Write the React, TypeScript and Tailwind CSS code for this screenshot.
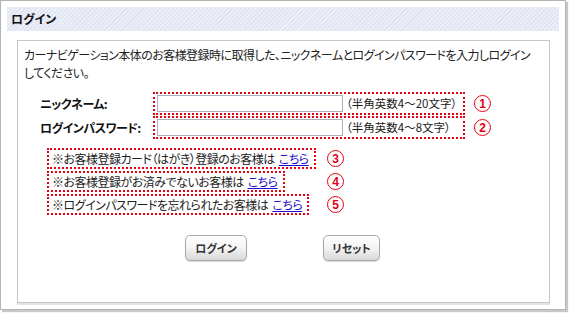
import React from "react";

function Circle({ n }: { n: string }) {
  return (
    <span className="w-[17px] h-[17px] rounded-full border-[1.5px] border-[#e50012] text-[#e50012] flex items-center justify-center text-[12px] font-bold leading-none shrink-0 font-['Liberation_Sans',sans-serif]">
      {n}
    </span>
  );
}

function Btn({ label, w }: { label: string; w: string }) {
  return (
    <button
      className={`${w} h-[26px] rounded-[5px] border border-[#a8a8a8] bg-gradient-to-b from-white via-[#f4f4f4] to-[#d8d8d8] shadow-[0_1px_1px_rgba(0,0,0,0.15)] text-[11px] font-bold text-[#333] flex items-center justify-center`}
    >
      {label}
    </button>
  );
}

export default function App() {
  const links = [
    { t: "※お客様登録カード（はがき）登録のお客様は", n: "3" },
    { t: "※お客様登録がお済みでないお客様は", n: "4" },
    { t: "※ログインパスワードを忘れられたお客様は", n: "5" },
  ];
  return (
    <div className="w-[570px] h-[315px] bg-white font-['Noto_Sans_CJK_JP',sans-serif] text-[#222] [font-feature-settings:'palt']">
      <div className="w-[566px] h-[310px] border border-[#b4b4b4] shadow-[2px_2px_1px_#c8c8c8] bg-white pt-[6px] px-[6px]">
        <div className="h-[24px] w-[552px] bg-[repeating-linear-gradient(-45deg,#dfe3f2_0px,#dfe3f2_1.5px,#eef0f8_1.5px,#eef0f8_3px)] flex items-center pl-[4px] text-[12px] font-bold text-[#111]">
          ログイン
        </div>
        <div className="mt-[9px] ml-[10px] w-[533px] h-[263px] border border-[#c6c6c6] shadow-[0_2px_0_#e4e4e4] pt-[5px] flex flex-col">
          <p className="pl-[6px] text-[12px] leading-[18px] tracking-[-0.55px] text-[#222] whitespace-nowrap">
            カーナビゲーション本体のお客様登録時に取得した、ニックネームとログインパスワードを入力しログイン
            <br />
            してください。
          </p>

          <div className="mt-[10px] flex flex-col">
            {[
              { label: "ニックネーム:", hint: "（半角英数4～20文字）", n: "1" },
              { label: "ログインパスワード:", hint: "（半角英数4～8文字）", n: "2" },
            ].map((r, i) => (
              <div key={i} className={`flex items-center ${i === 1 ? "mt-[1px]" : ""}`}>
                <div className="w-[135px] pl-[22px] text-[12px] font-bold text-[#111] tracking-[-0.5px]">{r.label}</div>
                <div className="w-[312px] h-[23px] border-2 border-dotted border-[#e50012] flex items-center pl-[2px]">
                  <input
                    type="text"
                    className="w-[186px] h-[17px] border border-[#a9b0bc] bg-white outline-none"
                  />
                  <span className="ml-[3px] text-[11.5px] text-[#222] whitespace-nowrap">{r.hint}</span>
                </div>
                <div className="ml-[9px]">
                  <Circle n={r.n} />
                </div>
              </div>
            ))}
          </div>

          <div className="mt-[9px] flex flex-col gap-[2px] pl-[29px]">
            {links.map((l, i) => (
              <div key={i} className="flex items-center">
                <div className="w-[280px]">
                  <div className="w-fit h-[21px] border-2 border-dotted border-[#e50012] flex items-center pl-[3px] pr-[5px] text-[12px] tracking-[-0.5px] text-[#222] whitespace-nowrap">
                    {l.t}
                    <a href="#" className="ml-[4px] text-[#1a0dcc] underline">
                      こちら
                    </a>
                  </div>
                </div>
                <Circle n={l.n} />
              </div>
            ))}
          </div>

          <div className="mt-[20px] flex pl-[167px] gap-[76px]">
            <Btn label="ログイン" w="w-[62px]" />
            <Btn label="リセット" w="w-[57px]" />
          </div>
        </div>
      </div>
    </div>
  );
}
